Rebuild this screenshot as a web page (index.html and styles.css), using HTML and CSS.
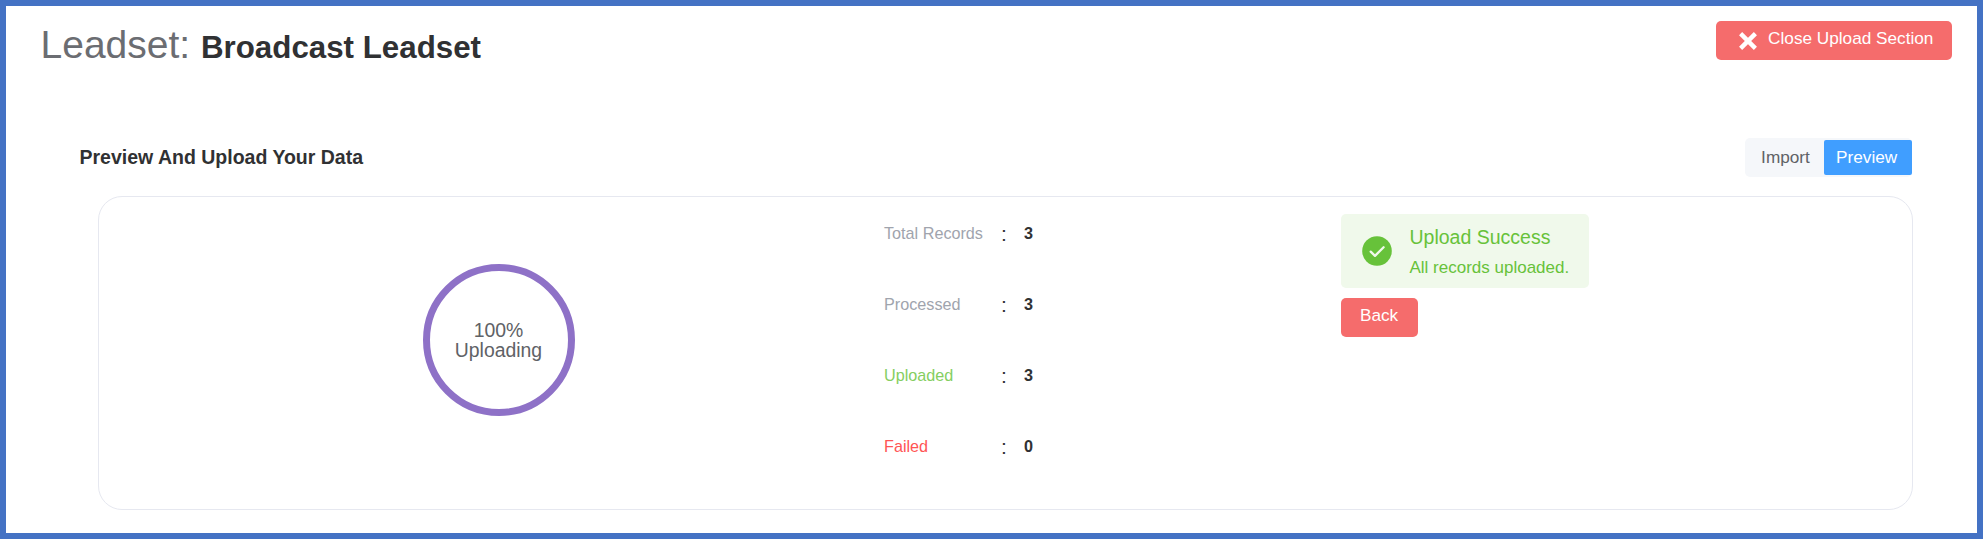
FILE: index.html
```html
<!DOCTYPE html>
<html lang="en">
<head>
<meta charset="utf-8">
<title>Leadset</title>
<link rel="stylesheet" href="styles.css">
</head>
<body>
<div class="page">
  <header class="header">
    <h1 class="title">Leadset: <strong class="title-name">Broadcast Leadset</strong></h1>
    <button class="btn btn-close">
      <svg class="close-icon" viewBox="0 0 18 18"><path d="M1.6 1.6 16.4 16.4M16.4 1.6 1.6 16.4" stroke="#fff" stroke-width="4.4" fill="none"/></svg>
      <span>Close Upload Section</span>
    </button>
  </header>
  <section class="section">
    <div class="section-head">
      <h2 class="section-title">Preview And Upload Your Data</h2>
      <div class="tabs"><span class="tab">Import</span><span class="tab tab-active">Preview</span></div>
    </div>
    <div class="card">
      <div class="progress-col">
        <div class="progress"><span>100%</span><span>Uploading</span></div>
      </div>
      <div class="stats">
        <div class="stat"><span class="label">Total Records</span><span class="colon">:</span><b class="value">3</b></div>
        <div class="stat"><span class="label">Processed</span><span class="colon">:</span><b class="value">3</b></div>
        <div class="stat"><span class="label label-ok">Uploaded</span><span class="colon">:</span><b class="value">3</b></div>
        <div class="stat"><span class="label label-bad">Failed</span><span class="colon">:</span><b class="value">0</b></div>
      </div>
      <div class="result">
        <div class="alert">
          <svg class="alert-icon" viewBox="0 0 30 30"><circle cx="15" cy="15" r="14.8" fill="#67c23a"/><path d="M8.7 15.6 13 19.9 21.6 11.2" fill="none" stroke="#f0f9eb" stroke-width="2.3" stroke-linecap="round" stroke-linejoin="round"/></svg>
          <div class="alert-text">
            <div class="alert-title">Upload Success</div>
            <div class="alert-desc">All records uploaded.</div>
          </div>
        </div>
        <button class="btn btn-back">Back</button>
      </div>
    </div>
  </section>
</div>
</body>
</html>
```
FILE: styles.css
```css
* { box-sizing: border-box; }
body { margin: 0; font-family: "Liberation Sans", Arial, sans-serif; color: #303133; background: #fff; }
.page { height: 539px; border: 6px solid #4472c4; overflow: hidden; }
.header { display: flex; justify-content: space-between; align-items: flex-start; height: 132px; padding: 15px 25.4px 0 34.5px; }
.title { margin: 0; font-size: 39px; line-height: 48px; font-weight: 400; color: #6b6d72; white-space: nowrap; }
.title-name { font-size: 31.3px; font-weight: 700; color: #303133; }
.btn { display: flex; border: 0; border-radius: 5px; background: #f56c6c; color: #fff; font-family: inherit; font-size: 17.2px; white-space: nowrap; }
.btn-close { width: 236px; height: 39px; padding: 0 0 0 23.6px; gap: 10.9px; align-items: flex-start; line-height: 35px; }
.close-icon { width: 18px; height: 18px; margin-top: 10.5px; }
.section { padding: 0 65.4px 0 73.5px; }
.section-head { display: flex; justify-content: space-between; align-items: center; height: 39px; }
.section-title { margin: 0; padding-bottom: 2px; font-size: 19.5px; line-height: 36px; font-weight: 700; }
.tabs { display: flex; align-items: center; height: 39px; border-radius: 5px; background: #f5f7fa; font-size: 17.2px; color: #606266; }
.tab { width: 79px; height: 35px; padding-left: 16px; line-height: 34px; }
.tab-active { width: 87.5px; padding-left: 12px; border-radius: 2px; background: #409eff; color: #fff; }
.card { display: flex; margin: 19px 0 0 18.5px; width: 1815px; height: 313.5px; border: 1.5px solid #e6e8f0; border-radius: 24px; }
.progress-col { width: 785px; padding: 67px 0 0 323.5px; }
.progress { display: flex; flex-direction: column; align-items: center; justify-content: center; width: 152px; height: 152px; padding-top: 1px; border: 7.5px solid #8e71c7; border-radius: 50%; font-size: 19.4px; line-height: 19.7px; color: #606266; }
.stats { width: 457px; padding-top: 18px; }
.stat { display: flex; height: 71px; line-height: 36px; font-size: 16.2px; }
.label { width: 117px; color: #a0a4ad; }
.label-ok { color: #85ce61; }
.label-bad { color: #ff5454; }
.colon { width: 23px; padding-top: 1px; font-size: 21px; }
.result { padding-top: 17px; }
.alert { display: flex; align-items: center; width: 248px; height: 74px; padding-left: 21px; gap: 17.5px; border-radius: 5px; background: #f0f9eb; color: #67c23a; white-space: nowrap; }
.alert-icon { width: 30px; height: 30px; }
.alert-text { padding-top: 3px; }
.alert-title { font-size: 19.5px; line-height: 30px; }
.alert-desc { font-size: 17px; line-height: 31px; }
.btn-back { width: 77px; height: 39px; margin-top: 10px; padding: 0 0 0 19px; line-height: 35px; }
```
